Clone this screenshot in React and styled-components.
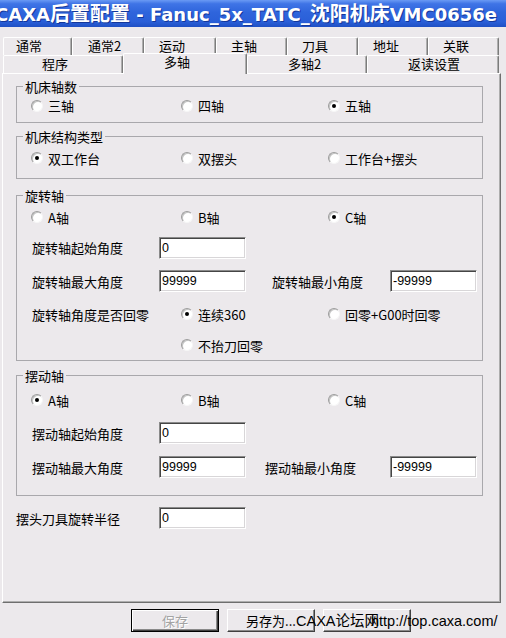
import styled, { createGlobalStyle, css } from 'styled-components'

const GlobalStyle = createGlobalStyle`
  html, body {
    margin: 0;
    padding: 0;
    background: #ece9ec;
  }
  body {
    font-family: "Noto Sans CJK SC", "Liberation Sans", sans-serif;
    font-size: 13px;
    color: #000;
  }
`;

const Window = styled.div`
  position: relative;
  display: flex;
  flex-direction: column;
  width: 506px;
  height: 638px;
  overflow: hidden;
  background: #ece9ec;
`;

const TitleBar = styled.div`
  flex: none;
  display: flex;
  align-items: center;
  height: 27px;
  overflow: hidden;
  white-space: nowrap;
  background: linear-gradient(to bottom, #6a9af4 0%, #3f74e6 14%, #2f65dc 45%, #2a5fd8 80%, #1f50c4 100%);
`;

const TitleText = styled.div`
  margin-left: -5px;
  color: #fff;
  font-family: "DejaVu Sans", sans-serif;
  font-weight: bold;
  font-size: 18px;
  line-height: 27px;
  text-shadow: 1px 1px 0 #14379a;
`;

const Cjk = styled.span`
  font-family: "Noto Sans CJK SC", sans-serif;
  font-size: 20px;
`;

const TabStrip = styled.div`
  position: relative;
  z-index: 1;
  display: flex;
  flex-direction: column;
  margin-top: 10px;
  padding-left: 3px;
`;

const TabRow = styled.div`
  display: flex;
  height: 18px;
`;

const Tab = styled.div`
  flex: none;
  box-sizing: border-box;
  width: ${p => p.$w}px;
  height: 18px;
  padding-left: ${p => p.$pad}px;
  border-top: 1px solid #fff;
  border-left: 1px solid #fff;
  border-right: 1px solid #7c7c7c;
  border-radius: 2px 2px 0 0;
  box-shadow: inset -1px 0 0 #aeaeae;
  background: #ece9ec;
  font-size: 13px;
  line-height: 16px;
  white-space: nowrap;

  ${p => p.$active && css`
    position: relative;
    z-index: 2;
    height: 21px;
    margin-top: -2px;
    margin-bottom: -1px;
  `}
`;

const Panel = styled.div`
  flex: none;
  box-sizing: border-box;
  width: 499px;
  height: 530px;
  margin-left: 2px;
  padding: 5px 18px 0 13px;
  border-top: 1px solid #fff;
  border-left: 1px solid #fff;
  border-right: 1px solid #6e6e6e;
  border-bottom: 1px solid #6e6e6e;
  box-shadow: inset -1px -1px 0 #aeaeae;
`;

const Group = styled.fieldset`
  box-sizing: border-box;
  width: 467px;
  min-width: 0;
  margin: ${p => p.$mt || 0}px 0 0;
  padding: 0 0 ${p => p.$pb || 0}px;
  border: 1px solid #a9a8ac;
`;

const Legend = styled.legend`
  margin-left: 6px;
  padding: 0 2px;
  font-size: 13px;
  line-height: 15px;
`;

const Row = styled.div`
  display: flex;
  align-items: center;
  height: ${p => p.$h}px;
  margin-top: ${p => p.$mt || 0}px;
  padding-left: ${p => (p.$pl === undefined ? 14 : p.$pl)}px;
`;

const Cell = styled.div`
  flex: none;
  display: flex;
  align-items: center;
  width: ${p => (p.$w ? `${p.$w}px` : 'auto')};
  margin-left: ${p => p.$ml || 0}px;
  white-space: nowrap;
`;

const Label = styled(Cell)`
  padding-left: ${p => p.$indent ?? 1}px;
  box-sizing: border-box;
`;

const Circle = styled.span`
  flex: none;
  display: flex;
  align-items: center;
  justify-content: center;
  box-sizing: border-box;
  width: 12px;
  height: 12px;
  margin-right: 5px;
  border-radius: 50%;
  border: 1px solid;
  border-color: #9c9c9c #f6f6f6 #f6f6f6 #9c9c9c;
  box-shadow: inset 1px 1px 0 #c4c4c4;
  background: #fff;

  &::after {
    content: '';
    display: ${p => (p.$on ? 'block' : 'none')};
    width: 4px;
    height: 4px;
    border-radius: 50%;
    background: #000;
  }
`;

const Field = styled.div`
  flex: none;
  box-sizing: border-box;
  width: 87px;
  height: 22px;
  padding-left: 2px;
  border: 1px solid;
  border-color: #8a8a8a #fff #fff #8a8a8a;
  box-shadow: inset 1px 1px 0 #454545, inset -1px -1px 0 #d8d6d8;
  background: #fff;
  font-family: "Liberation Sans", sans-serif;
  font-size: 12.5px;
  line-height: 20px;
`;

const ButtonBar = styled.div`
  display: flex;
  gap: 8px;
  margin-top: 6px;
  padding-left: 131px;
`;

const Button = styled.div`
  flex: none;
  display: flex;
  align-items: center;
  justify-content: center;
  box-sizing: border-box;
  width: 88px;
  height: 23px;
  border: 1px solid;
  border-color: #fff #404040 #404040 #fff;
  box-shadow: inset -1px -1px 0 #8a8a8a;
  font-size: 13px;
  color: #000;

  ${p => p.$default && css`
    border-color: #000;
    box-shadow: inset 1px 1px 0 #fff, inset -1px -1px 0 #404040, inset -2px -2px 0 #8a8a8a;
  `}
  ${p => p.$disabled && css`
    color: #a3a3a3;
    text-shadow: 1px 1px 0 #fff;
  `}
`;

const Watermark = styled.div`
  position: absolute;
  left: 296px;
  top: 611px;
  font-family: "Liberation Sans", "Noto Sans CJK SC", sans-serif;
  font-size: 14.5px;
  line-height: 20px;
  color: #000;
  white-space: nowrap;
`;

const Url = styled.span`
  margin-left: -8px;
`;

const Radio = ({ on, w, children }) => (
  <Cell $w={w}>
    <Circle $on={on} />
    {children}
  </Cell>
);

const row1 = [
  ['通常', 69, 12], ['通常2', 72, 15], ['运动', 72, 14], ['主轴', 71, 14],
  ['刀具', 71, 14], ['地址', 70, 14], ['关联', 71, 14],
];

const row2 = [
  ['程序', 120, 38], ['多轴', 124, 40, true], ['多轴2', 120, 40], ['返读设置', 132, 40],
];

const App = () => (
  <Window>
    <GlobalStyle />
    <TitleBar>
      <TitleText>
        CAXA<Cjk>后置配置</Cjk> - Fanuc_5x_TATC_<Cjk>沈阳机床</Cjk>VMC0656e
      </TitleText>
    </TitleBar>

    <TabStrip>
      <TabRow>
        {row1.map(([t, w, pad]) => <Tab key={t} $w={w} $pad={pad}>{t}</Tab>)}
      </TabRow>
      <TabRow>
        {row2.map(([t, w, pad, active]) => <Tab key={t} $w={w} $pad={pad} $active={active}>{t}</Tab>)}
      </TabRow>
    </TabStrip>

    <Panel>
      <Group $pb={5}>
        <Legend>机床轴数</Legend>
        <Row $h={23}>
          <Radio w={150}>三轴</Radio>
          <Radio w={147}>四轴</Radio>
          <Radio on>五轴</Radio>
        </Row>
      </Group>

      <Group $mt={6} $pb={6}>
        <Legend>机床结构类型</Legend>
        <Row $h={28}>
          <Radio on w={150}>双工作台</Radio>
          <Radio w={147}>双摆头</Radio>
          <Radio>工作台+摆头</Radio>
        </Row>
      </Group>

      <Group $mt={9}>
        <Legend>旋转轴</Legend>
        <Row $h={28}>
          <Radio w={150}>A轴</Radio>
          <Radio w={147}>B轴</Radio>
          <Radio on>C轴</Radio>
        </Row>
        <Row $h={33}>
          <Label $w={128}>旋转轴起始角度</Label>
          <Field>0</Field>
        </Row>
        <Row $h={34}>
          <Label $w={128}>旋转轴最大角度</Label>
          <Field>99999</Field>
          <Label $w={119} $ml={25}>旋转轴最小角度</Label>
          <Field>-99999</Field>
        </Row>
        <Row $h={32}>
          <Label $w={150}>旋转轴角度是否回零</Label>
          <Radio on w={147}>连续360</Radio>
          <Radio>回零+G00时回零</Radio>
        </Row>
        <Row $h={30} $pl={164}>
          <Radio>不抬刀回零</Radio>
        </Row>
      </Group>

      <Group $mt={7} $pb={10}>
        <Legend>摆动轴</Legend>
        <Row $h={34}>
          <Radio on w={150}>A轴</Radio>
          <Radio w={147}>B轴</Radio>
          <Radio>C轴</Radio>
        </Row>
        <Row $h={32}>
          <Label $w={128}>摆动轴起始角度</Label>
          <Field>0</Field>
        </Row>
        <Row $h={36}>
          <Label $w={128}>摆动轴最大角度</Label>
          <Field>99999</Field>
          <Label $w={126} $ml={18}>摆动轴最小角度</Label>
          <Field>-99999</Field>
        </Row>
      </Group>

      <Row $h={22} $mt={11} $pl={0}>
        <Label $w={143} $indent={0}>摆头刀具旋转半径</Label>
        <Field>0</Field>
      </Row>
    </Panel>

    <ButtonBar>
      <Button $default $disabled>保存</Button>
      <Button>另存为...</Button>
      <Button />
    </ButtonBar>

    <Watermark>
      CAXA论坛网<Url>http://top.caxa.com/</Url>
    </Watermark>
  </Window>
);

export default App
